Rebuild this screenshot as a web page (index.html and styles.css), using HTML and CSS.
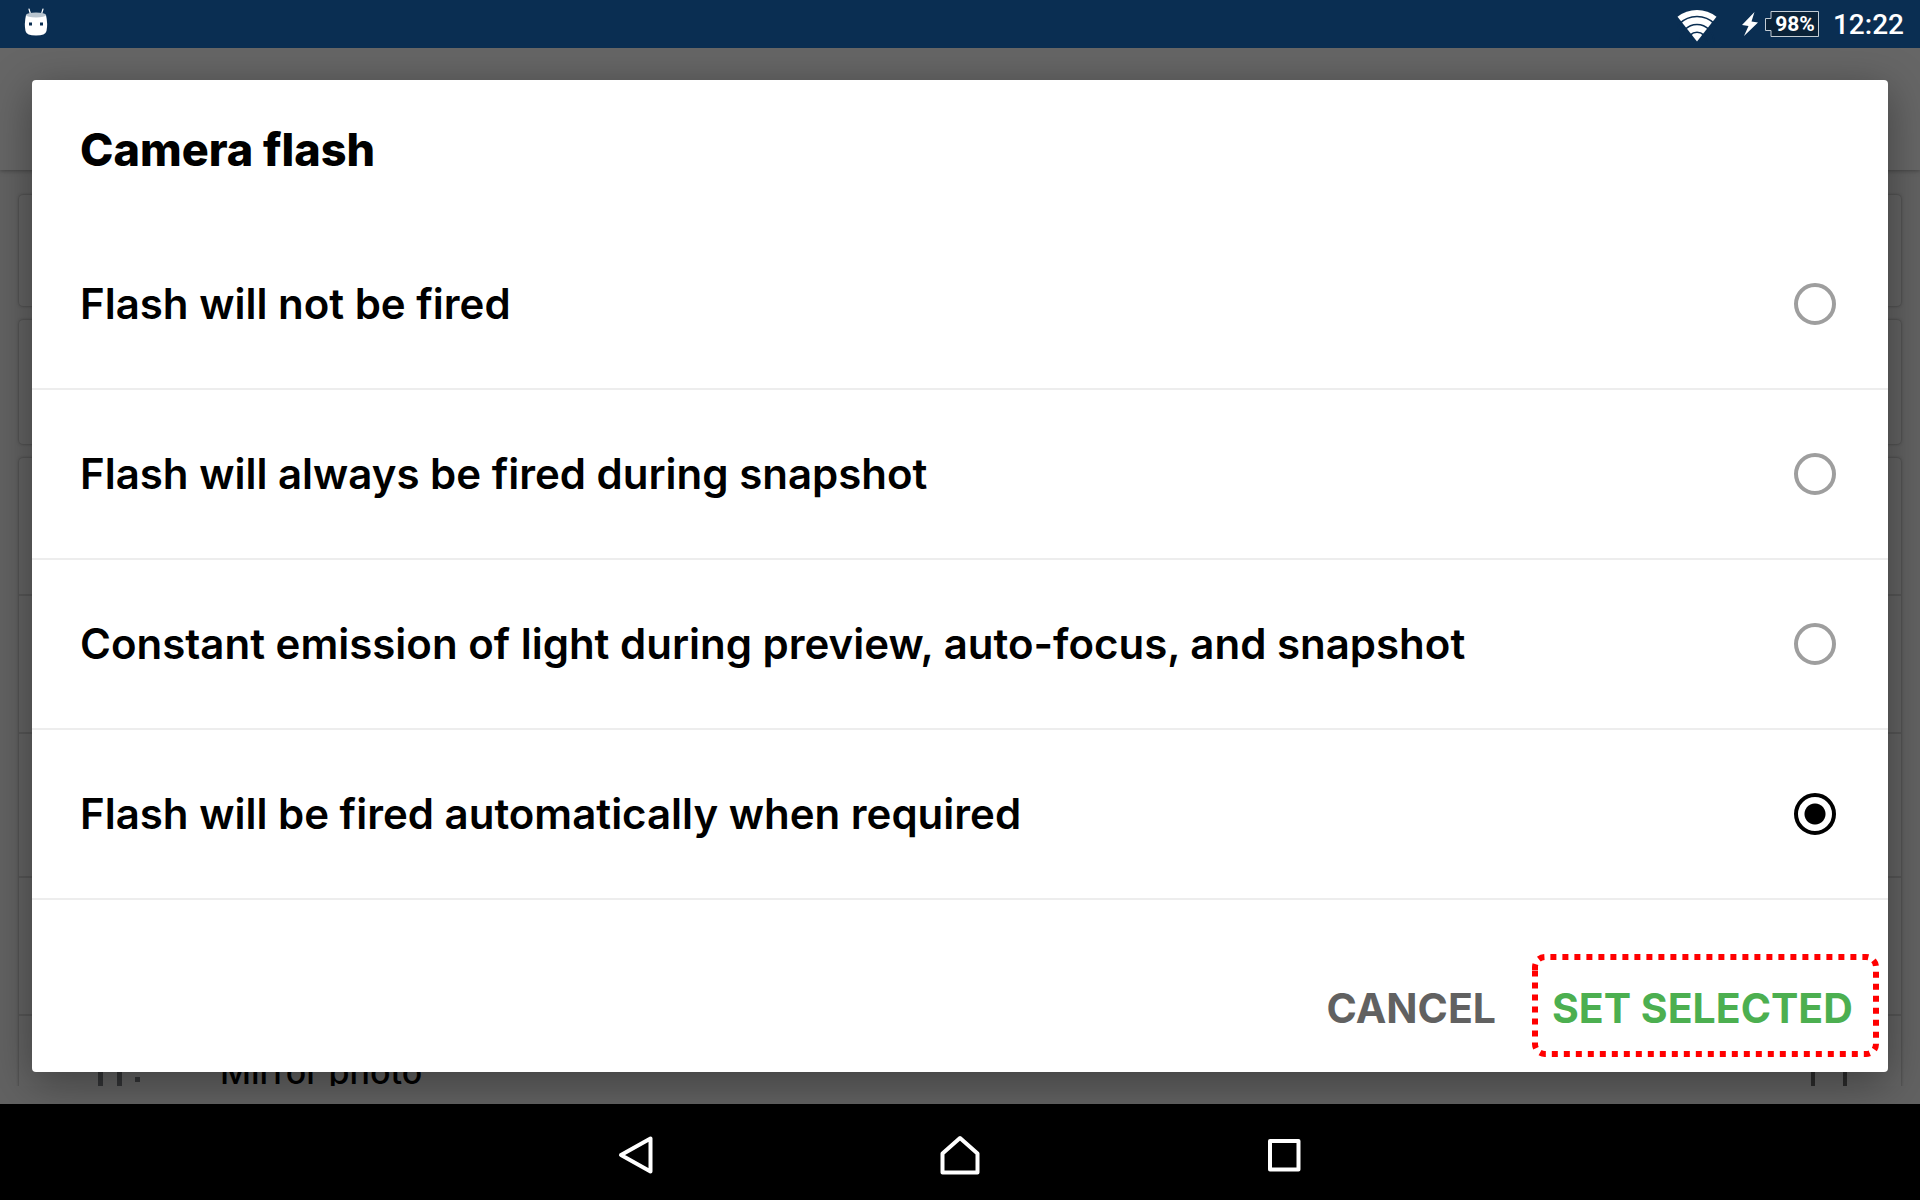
FILE: index.html
```html
<!DOCTYPE html>
<html lang="en">
<head>
<meta charset="utf-8">
<title>Camera flash</title>
<link rel="stylesheet" href="styles.css">
</head>
<body>
<header class="status">
  <svg class="droid" viewBox="0 0 24 28" width="24" height="28" aria-hidden="true">
    <path d="M5 1l1.500 5M19 1l-1.500 5" stroke="#fff" stroke-width="1.200" stroke-linecap="round"/>
    <path d="M2 7Q0 16 1.500 23Q2.500 27.500 12 27.500T22.500 23Q24 16 22 7Q12 10 2 7Z" fill="#fff"/>
    <ellipse cx="12" cy="7" rx="10" ry="2.500" fill="#b9c5cf"/>
    <path d="M5 14.500h3v3H5zM16 14.500h3v3h-3z" fill="#0a2e52"/>
  </svg>
  <div class="indicators">
    <svg class="wifi" viewBox="0 0 40 32" width="40" height="32" aria-hidden="true">
      <path d="M20 31.500L.500 6.800A31.500 31.500 0 0 1 39.500 6.800Z" fill="#fff"/>
      <g fill="none" stroke="#0a2e52" stroke-width="1.600">
        <circle cx="20" cy="31.500" r="25"/>
        <circle cx="20" cy="31.500" r="17"/>
        <circle cx="20" cy="31.500" r="9.300"/>
      </g>
    </svg>
    <svg class="bolt" viewBox="0 0 16 24" width="16" height="24" aria-hidden="true">
      <path d="M12.500 0L0 13l6.500 1L2 24L16 10.500L9.500 9.500Z" fill="#fff"/>
    </svg>
    <span class="battery"><svg viewBox="0 0 54 27" width="54" height="27" aria-hidden="true"><path d="M6 .500h47.500v25H6v-6H.500v-12H6Z" fill="#0a2238" stroke="#c3ccd4"/></svg><span class="level">98%</span></span>
    <time class="clock">12:22</time>
  </div>
</header>

<main class="screen">
  <div class="app" aria-hidden="true">
    <div class="appbar"></div>
    <div class="settings">
      <div class="card short"></div>
      <div class="card medium"></div>
      <div class="card list">
        <div class="row"></div>
        <div class="row"></div>
        <div class="row tall"></div>
        <div class="row"></div>
        <div class="row mirror">
          <svg viewBox="0 0 44 40" width="44" height="40"><path d="M0 0h5v40H0zM19 0h5v40h-5zM37 0h5v8h-5zM37 13h5v5h-5z" fill="#333436"/></svg>
          <span class="label">Mirror photo</span>
          <span class="box"></span>
        </div>
      </div>
    </div>
  </div>

  <form class="dialog" role="dialog" aria-labelledby="title">
    <h1 class="title" id="title">Camera flash</h1>
    <label class="option"><span>Flash will not be fired</span><input class="radio" type="radio" name="flash"></label>
    <label class="option"><span>Flash will always be fired during snapshot</span><input class="radio" type="radio" name="flash"></label>
    <label class="option"><span>Constant emission of light during preview, auto-focus, and snapshot</span><input class="radio" type="radio" name="flash"></label>
    <label class="option"><span>Flash will be fired automatically when required</span><input class="radio" type="radio" name="flash" checked></label>
    <div class="actions">
      <button class="action" type="button">CANCEL</button>
      <button class="action confirm" type="button">SET SELECTED
        <svg class="outline" viewBox="0 0 347 103" aria-hidden="true"><path d="M3 16V13A10 10 0 0 1 13 3H334A10 10 0 0 1 344 13V90A10 10 0 0 1 334 100H13A10 10 0 0 1 3 90V16" fill="none" stroke="#f00" stroke-width="6" stroke-dasharray="6 6"/></svg>
      </button>
    </div>
  </form>
</main>

<nav class="navbar">
  <button class="nav" type="button" aria-label="Back"><svg viewBox="0 0 40 40" width="40" height="40"><path d="M34.500 3.500V36.500L5 20Z"/></svg></button>
  <button class="nav" type="button" aria-label="Home"><svg viewBox="0 0 40 40" width="40" height="40"><path d="M2.500 37.500V18.500L20 3L37.500 18.500V37.500Z"/></svg></button>
  <button class="nav" type="button" aria-label="Recent apps"><svg viewBox="0 0 40 40" width="40" height="40"><path d="M6 6H34.500V34.500H6Z"/></svg></button>
</nav>
</body>
</html>
```
FILE: styles.css
```css
* { box-sizing: border-box; }

body {
  margin: 0;
  min-height: 100vh;
  display: flex;
  flex-direction: column;
  background: #000;
  color: #000;
  font-family: Inter, "Open Sans", sans-serif;
}

.status {
  height: 48px;
  padding: 0 16px 0 24px;
  display: flex;
  align-items: center;
  justify-content: space-between;
  background: #0a2e52;
  color: #fff;
  font-family: Roboto, sans-serif;
}
.droid { margin-bottom: 4px; }
.indicators { display: flex; align-items: center; }
.wifi { margin: 4px 25px 0 0; }
.bolt { margin-right: 7px; }
.battery { display: grid; margin-right: 14px; }
.battery > * { grid-area: 1 / 1; }
.level {
  padding-left: 6px;
  text-align: center;
  font-size: 21px;
  font-weight: 700;
  line-height: 26px;
}
.clock { padding-top: 2px; font-size: 28px; font-weight: 500; line-height: 46px; }

.screen {
  position: relative;
  flex: 1;
  display: flex;
  flex-direction: column;
  padding: 32px;
  overflow: hidden;
  background: #626262;
}

/* Settings page dimmed behind the dialog */
.app {
  position: absolute;
  inset: 0 0 18px;
  display: flex;
  flex-direction: column;
}
.appbar {
  flex: none;
  height: 122px;
  background: #666;
  box-shadow: 0 1px 4px #444;
}
.settings {
  flex: 1;
  min-height: 0;
  padding: 25px 19px 0;
  display: flex;
  flex-direction: column;
  gap: 14px;
  overflow: hidden;
}
.card {
  flex: none;
  border-radius: 4px;
  background: #636363;
  box-shadow: 0 0 3px #3c3c3c;
}
.short { height: 111px; }
.medium { height: 124px; }
.row { height: 138px; border-bottom: 2px solid #565656; }
.tall { height: 144px; }
.mirror {
  padding: 0 54px 0 79px;
  display: flex;
  align-items: center;
}
.label {
  flex: 1;
  padding: 0 0 24px 78px;
  font-size: 34px;
  font-weight: 500;
  line-height: 40px;
}
.box { width: 36px; height: 36px; border: 4px solid #2c2c2c; }

.dialog {
  position: relative;
  flex: 1;
  display: flex;
  flex-direction: column;
  border-radius: 4px;
  background: #fff;
  box-shadow: 0 10px 44px rgba(0, 0, 0, .38);
}
.title {
  margin: 0;
  padding: 46px 48px;
  font-size: 45px;
  font-weight: 800;
  line-height: 48px;
}
.option {
  min-height: 170px;
  padding: 0 52px 0 48px;
  display: flex;
  align-items: center;
  justify-content: space-between;
  border-bottom: 2px solid #ededed;
  font-size: 42px;
  font-weight: 600;
  line-height: 48px;
}
.radio {
  appearance: none;
  flex: none;
  width: 42px;
  height: 42px;
  margin: 0;
  border: 4px solid #9e9e9e;
  border-radius: 50%;
}
.radio:checked {
  border-color: #000;
  background: radial-gradient(circle, #000 10px, transparent 11px);
}
.actions {
  margin-top: auto;
  padding: 54px 9px 15px;
  display: flex;
  justify-content: flex-end;
  gap: 16px;
}
.action {
  position: relative;
  height: 103px;
  padding: 4px 20px 0;
  border: 0;
  background: none;
  color: #616161;
  font: 700 41px/48px Inter, "Open Sans", sans-serif;
  white-space: nowrap;
}
.confirm { width: 347px; color: #4caf50; text-align: left; }
.outline { position: absolute; inset: 0; }

.navbar {
  height: 96px;
  padding-top: 6px;
  display: flex;
  align-items: center;
  justify-content: center;
  gap: 284px;
  background: #000;
}
.nav {
  width: 40px;
  height: 40px;
  padding: 0;
  border: 0;
  background: none;
}
.nav svg { display: block; fill: none; stroke: #fff; stroke-width: 4; stroke-linejoin: round; }
```
